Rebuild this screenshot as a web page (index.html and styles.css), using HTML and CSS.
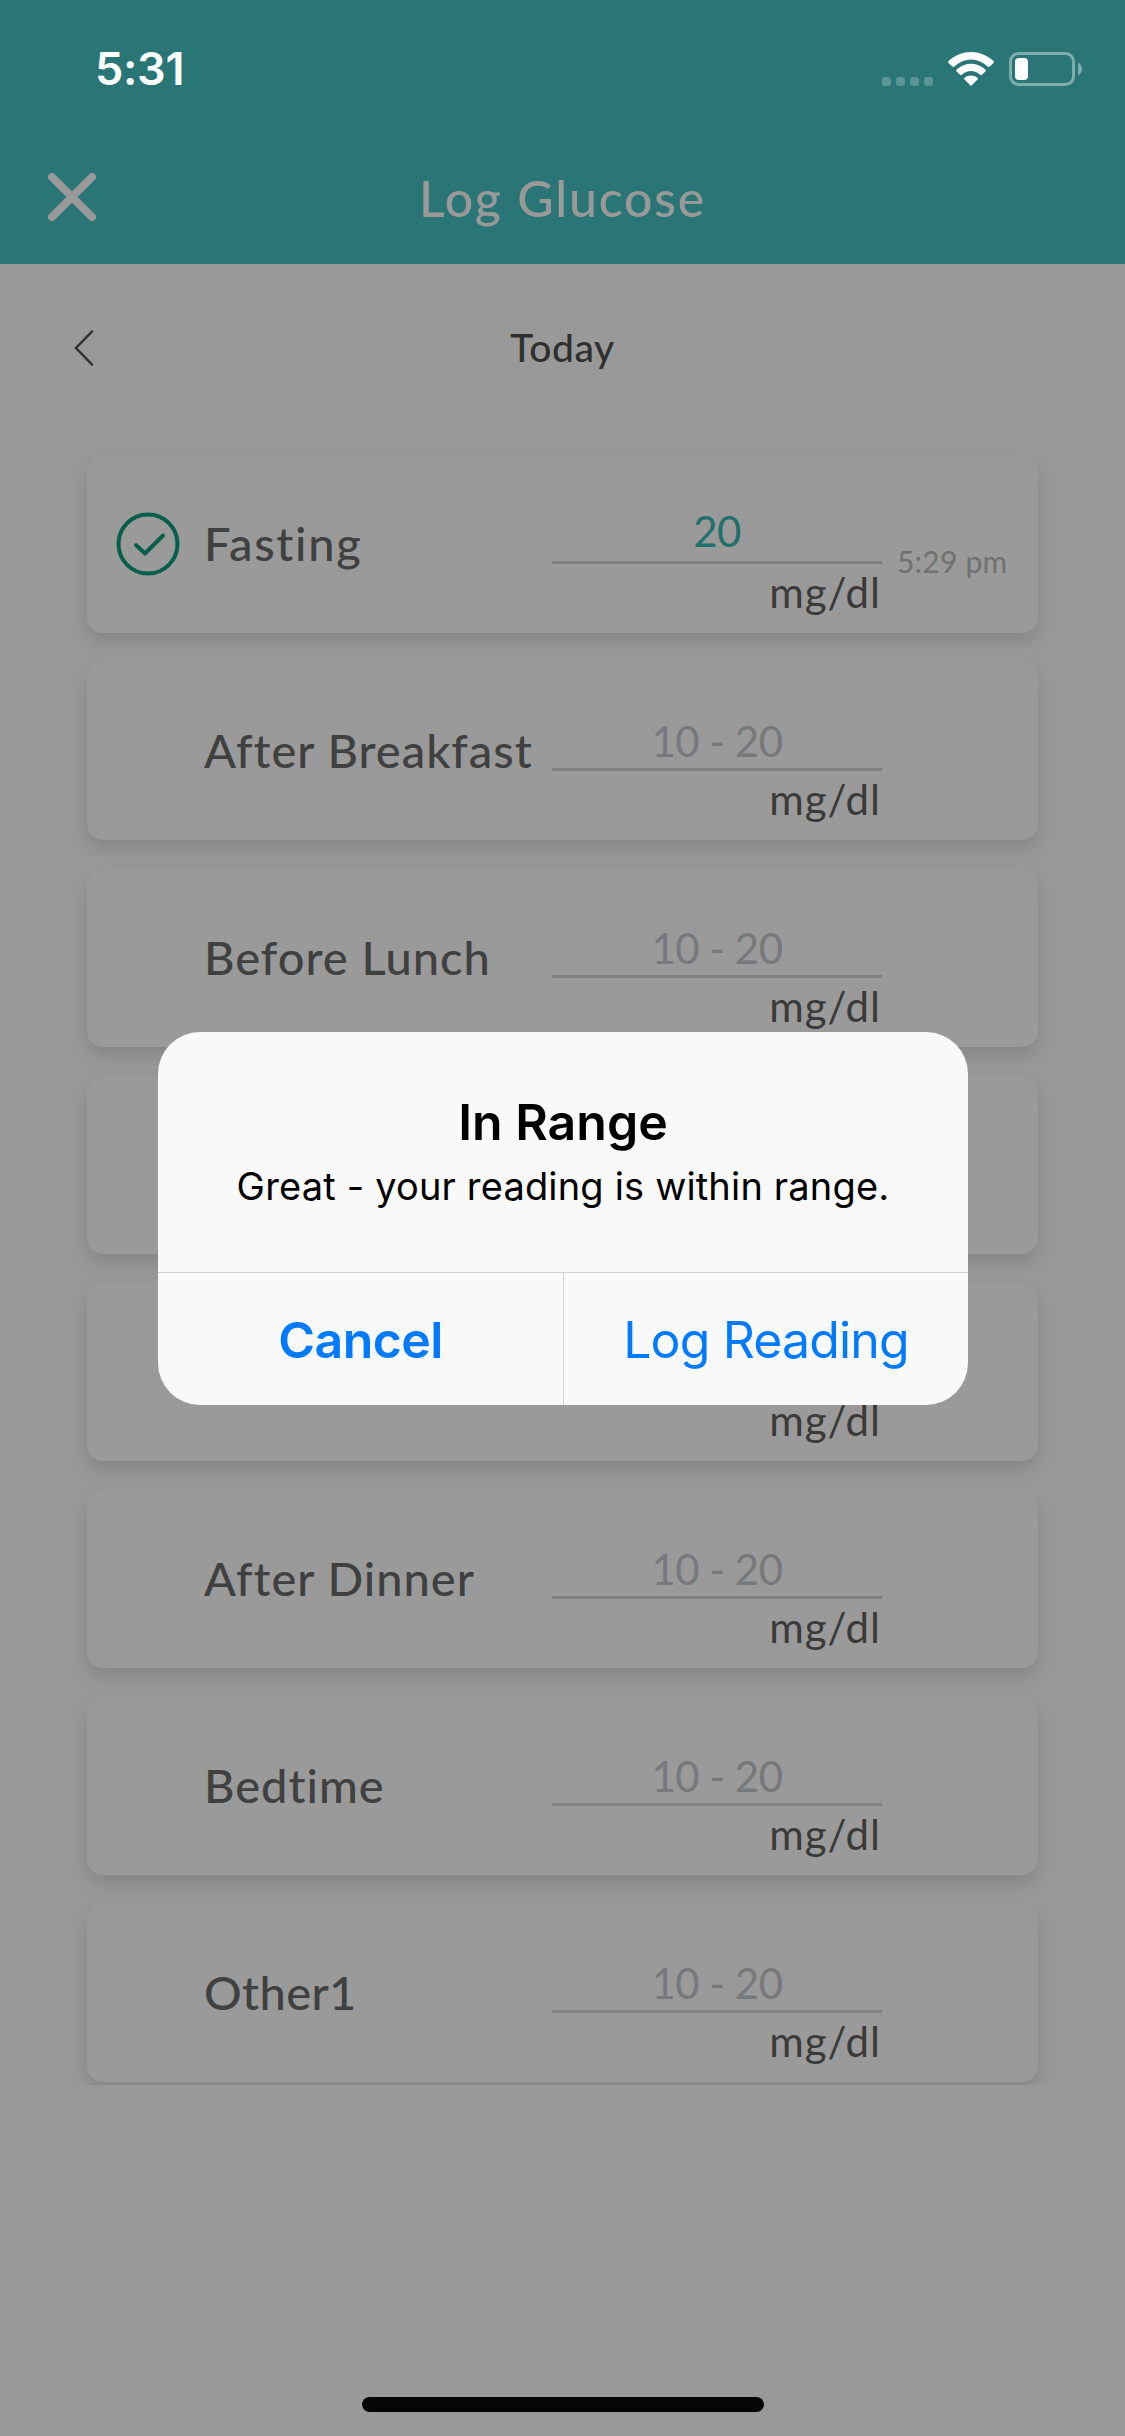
FILE: index.html
```html
<!DOCTYPE html>
<html lang="en">
<head>
<meta charset="utf-8">
<title>Log Glucose</title>
<link rel="stylesheet" href="styles.css">
</head>
<body>
<div class="screen">
  <header class="header">
    <div class="status">
      <span class="clock">5:31</span>
      <div class="indicators">
        <svg class="signal" width="51" height="9" viewBox="0 0 51 9"><rect width="9" height="9" rx="3"/><rect x="14" width="9" height="9" rx="3"/><rect x="28" width="9" height="9" rx="3"/><rect x="42" width="9" height="9" rx="3"/></svg>
        <svg class="wifi" width="46" height="34" viewBox="0 0 46 34"><path d="M.8 11.300C-.2 10.300 -.1 9.600 .8 8.800C13.500-2.900 32.500-2.900 45.200 8.800C46.100 9.600 46.200 10.300 45.200 11.300L41.700 14.600C41 15.200 40.400 15.200 39.700 14.600C29.500 5.200 16.500 5.200 6.300 14.600C5.600 15.200 5 15.200 4.300 14.600Z"/><path d="M8.600 19.400C8 18.700 8 18.100 8.700 17.500C17 9.800 29 9.800 37.300 17.500C38 18.100 38 18.700 37.400 19.400L34 22.700C33.300 23.300 32.800 23.300 32.100 22.700C26.700 17.900 19.300 17.900 13.900 22.700C13.200 23.300 12.700 23.300 12 22.700Z"/><path d="M16.500 27.500C16 27 16 26.300 16.600 25.800C20.400 22.700 25.600 22.700 29.400 25.800C30 26.300 30 27 29.500 27.500L23 34Z"/></svg>
        <svg class="battery" width="74" height="34" viewBox="0 0 74 34"><rect class="battery-shell" x="1.500" y="1.500" width="63" height="31" rx="8"/><rect class="battery-level" x="6" y="6" width="13" height="22" rx="4"/><path class="battery-cap" d="M69 10.500Q73 13 73 17T69 23.500Z"/></svg>
      </div>
    </div>
    <div class="navbar">
      <svg class="close" width="48" height="50" viewBox="0 0 48 50"><path d="M4 5L44 45M44 5L4 45"/></svg>
      <h1 class="title">Log Glucose</h1>
    </div>
  </header>

  <div class="day">
    <svg class="chevron" width="20" height="36" viewBox="0 0 20 36"><path d="M18 1.500L2 18L18 34.500"/></svg>
    <span class="day-name">Today</span>
  </div>

  <main class="list">
    <section class="card card-done">
      <svg class="check" width="64" height="64" viewBox="0 0 64 64"><circle cx="32" cy="32" r="29.500"/><path d="M20 33L29 41.500L47 23.500"/></svg>
      <span class="label label-fasting">Fasting</span>
      <div class="field"><span class="value">20</span><span class="unit">mg/dl</span></div>
      <span class="time">5:29 pm</span>
    </section>
    <section class="card">
      <span class="label">After Breakfast</span>
      <div class="field"><span class="value">10 - 20</span><span class="unit">mg/dl</span></div>
    </section>
    <section class="card">
      <span class="label">Before Lunch</span>
      <div class="field"><span class="value">10 - 20</span><span class="unit">mg/dl</span></div>
    </section>
    <section class="card"></section>
    <section class="card">
      <div class="field"><span class="value"></span><span class="unit">mg/dl</span></div>
    </section>
    <section class="card">
      <span class="label">After Dinner</span>
      <div class="field"><span class="value">10 - 20</span><span class="unit">mg/dl</span></div>
    </section>
    <section class="card">
      <span class="label">Bedtime</span>
      <div class="field"><span class="value">10 - 20</span><span class="unit">mg/dl</span></div>
    </section>
    <section class="card">
      <span class="label label-other">Other1</span>
      <div class="field"><span class="value">10 - 20</span><span class="unit">mg/dl</span></div>
    </section>
  </main>

  <div class="home-bar"></div>

  <div class="dialog" role="alertdialog">
    <div class="dialog-body">
      <h2 class="dialog-title">In Range</h2>
      <p class="dialog-text">Great - your reading is within range.</p>
    </div>
    <div class="dialog-actions">
      <span class="action action-cancel">Cancel</span>
      <span class="action action-log">Log Reading</span>
    </div>
  </div>
</div>
</body>
</html>
```
FILE: styles.css
```css
* { box-sizing: border-box; }
body { margin: 0; }
svg { display: block; fill: none; }
h1, h2, p { margin: 0; font-weight: inherit; }

.screen {
  position: relative;
  display: flex;
  flex-direction: column;
  width: 1125px;
  height: 2436px;
  overflow: hidden;
  background: #999;
  font-family: Lato, "Noto Sans", sans-serif;
}

.header { height: 264px; background: #2a7676; }
.status {
  display: flex;
  justify-content: space-between;
  height: 132px;
  padding: 52px 42px 0 95px;
}
.clock {
  color: #fff;
  font: 600 45px/34px Inter, sans-serif;
  letter-spacing: -.3px;
}
.indicators { display: flex; height: 34px; align-items: flex-end; }
.signal { margin-right: 15px; fill: #599595; }
.wifi { margin-right: 15px; fill: #fff; }
.battery-shell { stroke: #7facac; stroke-width: 3; }
.battery-level { fill: #fff; }
.battery-cap { fill: #7facac; }

.navbar {
  display: grid;
  grid-template-columns: 96px 1fr 96px;
  align-items: center;
  height: 132px;
}
.close { margin: 0 0 2px 48px; stroke: #999; stroke-width: 8; stroke-linecap: round; }
.title {
  text-align: center;
  color: #999;
  font-size: 50px;
  font-weight: 500;
  line-height: 60px;
  letter-spacing: 1.8px;
}

.day {
  display: grid;
  grid-template-columns: 96px 1fr 96px;
  align-items: center;
  height: 168px;
}
.chevron { margin-left: 74px; stroke: #2f2f2f; stroke-width: 2.5; stroke-linecap: round; }
.day-name {
  padding-bottom: 3px;
  text-align: center;
  color: #2f2f2f;
  font-size: 39px;
  font-weight: 500;
  letter-spacing: .6px;
}

.list {
  display: flex;
  flex-direction: column;
  gap: 29px;
  height: 1653px;
  padding: 23px 87px 0;
  overflow: hidden;
}
.card {
  display: grid;
  grid-template-columns: 117px 348px 330px 1fr;
  flex: none;
  height: 178px;
  border-radius: 16px;
  background: #9a9a9a;
  box-shadow: 0 9px 18px rgba(0, 0, 0, .13);
}
.check {
  grid-column: 1;
  align-self: center;
  margin-left: 29px;
  stroke: #066049;
  stroke-width: 4;
  stroke-linecap: round;
  stroke-linejoin: round;
}
.label {
  grid-column: 2;
  align-self: center;
  padding-bottom: 3px;
  color: #404040;
  font-size: 47px;
  font-weight: 500;
  line-height: 56px;
  letter-spacing: 1px;
  white-space: nowrap;
}
.label-fasting { letter-spacing: 1.7px; }
.label-other { letter-spacing: .4px; }
.field { grid-column: 3; display: flex; flex-direction: column; }
.value {
  height: 109px;
  padding-top: 54px;
  border-bottom: 3px solid #808080;
  text-align: center;
  color: #77787b;
  font-size: 42px;
  line-height: 50px;
  letter-spacing: -.5px;
}
.card-done .value { padding-top: 51px; color: #20706c; }
.unit {
  padding: 3px 1px 0 0;
  text-align: right;
  color: #3a3a3a;
  font-size: 42px;
  line-height: 50px;
  letter-spacing: 1px;
}
.time {
  grid-column: 4;
  padding: 88px 0 0 15px;
  color: #717171;
  font-size: 30px;
  line-height: 36px;
  letter-spacing: .2px;
}

.home-bar {
  width: 402px;
  height: 15px;
  margin: auto auto 24px;
  border-radius: 8px;
  background: #060606;
}

.dialog {
  position: absolute;
  left: 158px;
  top: 1032px;
  display: flex;
  flex-direction: column;
  width: 810px;
  height: 373px;
  border-radius: 42px;
  overflow: hidden;
  background: #f9f9f9;
  color: #000;
  font-family: Inter, sans-serif;
  text-align: center;
}
.dialog-body { flex: none; height: 240px; padding-top: 60px; }
.dialog-title { font-size: 50px; font-weight: 600; line-height: 60px; }
.dialog-text { padding-top: 10px; font-size: 38px; line-height: 48px; letter-spacing: .17px; }
.dialog-actions {
  display: grid;
  grid-template-columns: 405px 405px;
  flex: 1;
  border-top: 1px solid #d0d0d0;
  color: #007aff;
  font-size: 50px;
  line-height: 134px;
}
.action-cancel { font-weight: 600; letter-spacing: -.6px; }
.action-log { border-left: 1px solid #d0d0d0; letter-spacing: -.85px; }
```
